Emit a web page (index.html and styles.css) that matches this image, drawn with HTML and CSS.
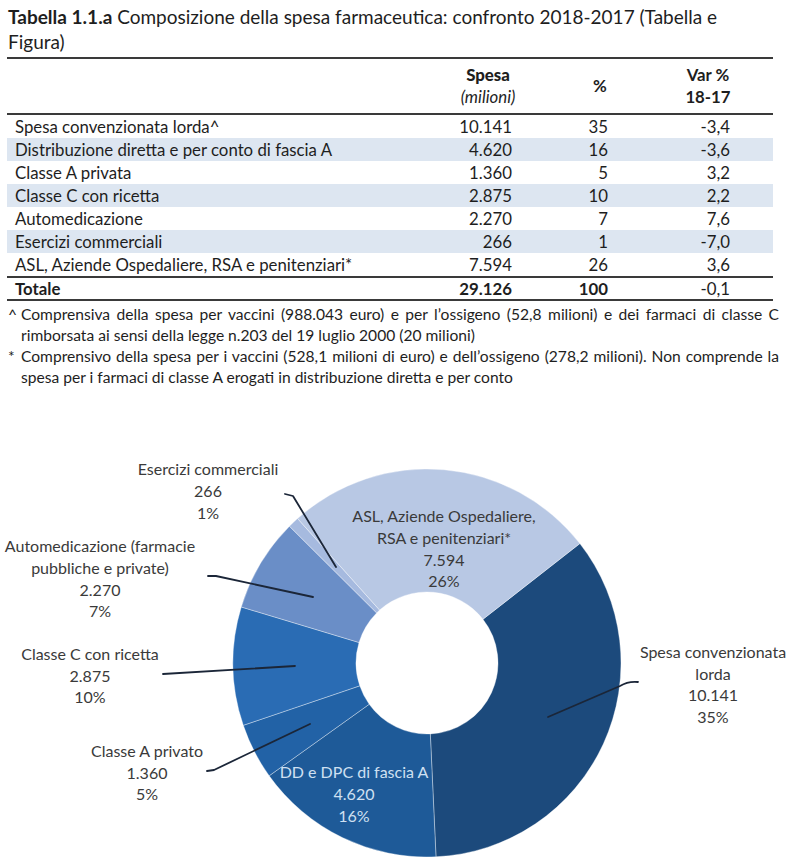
FILE: index.html
```html
<!DOCTYPE html>
<html lang="it">
<head>
<meta charset="utf-8">
<title>Tabella 1.1.a</title>
<link rel="stylesheet" href="styles.css">
</head>
<body>
<div class="page">
  <section class="top">
    <h1 class="title"><span class="tn">Tabella 1.1.a</span> Composizione della spesa farmaceutica: confronto 2018-2017 (Tabella e Figura)</h1>
    <table class="tbl">
      <colgroup>
        <col class="c1"><col class="c2"><col class="c3"><col class="c4">
      </colgroup>
      <thead>
        <tr>
          <th></th>
          <th class="h2"><b>Spesa</b><br><i>(milioni)</i></th>
          <th class="h3">%</th>
          <th class="h4">Var %<br>18-17</th>
        </tr>
      </thead>
      <tbody>
        <tr><td>Spesa convenzionata lorda^</td><td class="n2">10.141</td><td class="n3">35</td><td class="n4">-3,4</td></tr>
        <tr class="sh"><td>Distribuzione diretta e per conto di fascia A</td><td class="n2">4.620</td><td class="n3">16</td><td class="n4">-3,6</td></tr>
        <tr><td>Classe A privata</td><td class="n2">1.360</td><td class="n3">5</td><td class="n4">3,2</td></tr>
        <tr class="sh"><td>Classe C con ricetta</td><td class="n2">2.875</td><td class="n3">10</td><td class="n4">2,2</td></tr>
        <tr><td>Automedicazione</td><td class="n2">2.270</td><td class="n3">7</td><td class="n4">7,6</td></tr>
        <tr class="sh"><td>Esercizi commerciali</td><td class="n2">266</td><td class="n3">1</td><td class="n4">-7,0</td></tr>
        <tr><td>ASL, Aziende Ospedaliere, RSA e penitenziari*</td><td class="n2">7.594</td><td class="n3">26</td><td class="n4">3,6</td></tr>
        <tr class="tot"><td>Totale</td><td class="n2">29.126</td><td class="n3">100</td><td class="n4 normal">-0,1</td></tr>
      </tbody>
    </table>
    <div class="notes">
      <p class="note"><span class="mk">^</span><span class="tx">Comprensiva della spesa per vaccini (988.043 euro) e per l’ossigeno (52,8 milioni) e dei farmaci di classe C rimborsata ai sensi della legge n.203 del 19 luglio 2000 (20 milioni)</span></p>
      <p class="note"><span class="mk">*</span><span class="tx">Comprensivo della spesa per i vaccini (528,1 milioni di euro) e dell’ossigeno (278,2 milioni). Non comprende la spesa per i farmaci di classe A erogati in distribuzione diretta e per conto</span></p>
    </div>
  </section>
  <figure class="chart">
    <svg class="donut" width="804" height="444" viewBox="0 420 804 444" xmlns="http://www.w3.org/2000/svg">
      <g class="slices">
        <path class="s-spesa" d="M 579.87 546.55 A 194 194 0 0 1 436.00 859.79 L 430.30 736.92 A 71 71 0 0 0 482.95 622.29 Z"/>
        <path class="s-dd" d="M 436.00 859.79 A 194 194 0 0 1 269.16 778.79 L 369.23 707.28 A 71 71 0 0 0 430.30 736.92 Z"/>
        <path class="s-cla" d="M 269.16 778.79 A 194 194 0 0 1 243.30 728.35 L 359.77 688.82 A 71 71 0 0 0 369.23 707.28 Z"/>
        <path class="s-clc" d="M 243.30 728.35 A 194 194 0 0 1 241.26 609.97 L 359.02 645.50 A 71 71 0 0 0 359.77 688.82 Z"/>
        <path class="s-auto" d="M 241.26 609.97 A 194 194 0 0 1 289.45 529.19 L 376.66 615.93 A 71 71 0 0 0 359.02 645.50 Z"/>
        <path class="s-eser" d="M 289.45 529.19 A 194 194 0 0 1 297.54 521.51 L 379.62 613.12 A 71 71 0 0 0 376.66 615.93 Z"/>
        <path class="s-asl" d="M 297.54 521.51 A 194 194 0 0 1 579.87 546.55 L 482.95 622.29 A 71 71 0 0 0 379.62 613.12 Z"/>
      </g>
      <g class="leaders">
        <path d="M 285 497 L 293 499 L 336 570"/>
        <path d="M 208 579 L 216 579 L 313 600"/>
        <path d="M 163 677 L 295 669"/>
        <path d="M 207 774 L 214 773 L 310 727"/>
        <path d="M 638 685 Q 628 684 620 689 L 548 720"/>
      </g>
      <g class="labels">
        <text x="208" y="478">Esercizi commerciali</text>
        <text x="208" y="500">266</text>
        <text x="208" y="522">1%</text>

        <text x="100" y="555">Automedicazione (farmacie</text>
        <text x="100" y="577">pubbliche e private)</text>
        <text x="100" y="599">2.270</text>
        <text x="100" y="620">7%</text>

        <text x="90" y="663">Classe C con ricetta</text>
        <text x="90" y="685">2.875</text>
        <text x="90" y="706">10%</text>

        <text x="147" y="760">Classe A privato</text>
        <text x="147" y="782">1.360</text>
        <text x="147" y="803">5%</text>

        <text class="light" x="354" y="781">DD e DPC di fascia A</text>
        <text class="light" x="354" y="803">4.620</text>
        <text class="light" x="354" y="825">16%</text>

        <text x="713" y="661">Spesa convenzionata</text>
        <text x="713" y="683">lorda</text>
        <text x="713" y="704">10.141</text>
        <text x="713" y="726">35%</text>

        <text x="444" y="525">ASL, Aziende Ospedaliere,</text>
        <text x="444" y="547">RSA e penitenziari*</text>
        <text x="444" y="569">7.594</text>
        <text x="444" y="590">26%</text>
      </g>
    </svg>
  </figure>
</div>
</body>
</html>
```

FILE: styles.css
```css
html, body {
  margin: 0;
  padding: 0;
  background: #ffffff;
}

body {
  font-family: Lato, "Liberation Sans", sans-serif;
  color: #1e1e1e;
}

.page {
  width: 804px;
  height: 864px;
  overflow: hidden;
}

.top {
  padding: 4px 0 0 7px;
  height: 417px;
  box-sizing: border-box;
}

.title {
  margin: 0 0 0 1px;
  font-size: 19px;
  font-weight: 400;
  line-height: 25px;
  width: 760px;
}

.title .tn {
  font-weight: 700;
}

.tbl {
  margin-top: 3px;
  border-collapse: collapse;
  table-layout: fixed;
  width: 766px;
  font-size: 16.8px;
}

.c1 { width: 445px; }
.c2 { width: 72px; }
.c3 { width: 116px; }
.c4 { width: 133px; }

.tbl thead th {
  border-top: 2px solid #3a3a3a;
  border-bottom: 2px solid #3a3a3a;
  height: 54px;
  padding: 0;
  font-weight: 700;
  line-height: 22px;
  text-align: center;
  vertical-align: middle;
}

.tbl thead .h2 i {
  font-weight: 400;
}

.tbl thead .h3 {
  padding-left: 36px;
}

.tbl thead .h4 {
  padding-left: 3px;
}

.tbl td {
  height: 23px;
  padding: 0 0 0 8px;
  line-height: 23px;
  white-space: nowrap;
}

.tbl .sh td {
  background: #dde6f1;
}

.tbl td.n2 { text-align: right; padding: 0 12px 0 0; }
.tbl td.n3 { text-align: right; padding: 0 32px 0 0; }
.tbl td.n4 { text-align: right; padding: 0 43px 0 0; }

.tbl .tot td {
  border-top: 2px solid #3a3a3a;
  border-bottom: 2px solid #3a3a3a;
  font-weight: 700;
  height: 21px;
  line-height: 21px;
}

.tbl .tot td.normal {
  font-weight: 400;
}

.notes {
  margin-top: 3px;
  width: 772px;
  font-size: 15.6px;
  line-height: 21px;
}

.note {
  margin: 0;
  display: flex;
}

.note .mk {
  flex: 0 0 13px;
  padding-left: 1px;
}

.note .tx {
  text-align: justify;
}

.chart {
  margin: 0;
  width: 804px;
}

.donut {
  display: block;
}

.slices path {
  stroke: rgba(255, 255, 255, 0.45);
  stroke-width: 0.8;
}

.s-spesa { fill: #1c4a7c; }
.s-dd { fill: #1e5a98; }
.s-cla { fill: #2262a6; }
.s-clc { fill: #2a6cb4; }
.s-auto { fill: #6a8ec7; }
.s-eser { fill: #a6badf; }
.s-asl { fill: #b8c8e4; }

.leaders path {
  fill: none;
  stroke: #1b2638;
  stroke-width: 1.8;
  stroke-linecap: round;
  stroke-linejoin: round;
}

.labels text {
  font-family: Lato, "Liberation Sans", sans-serif;
  font-size: 16px;
  fill: #3a3a3a;
  text-anchor: middle;
}

.labels text.light {
  fill: #cfe0f2;
}
```
